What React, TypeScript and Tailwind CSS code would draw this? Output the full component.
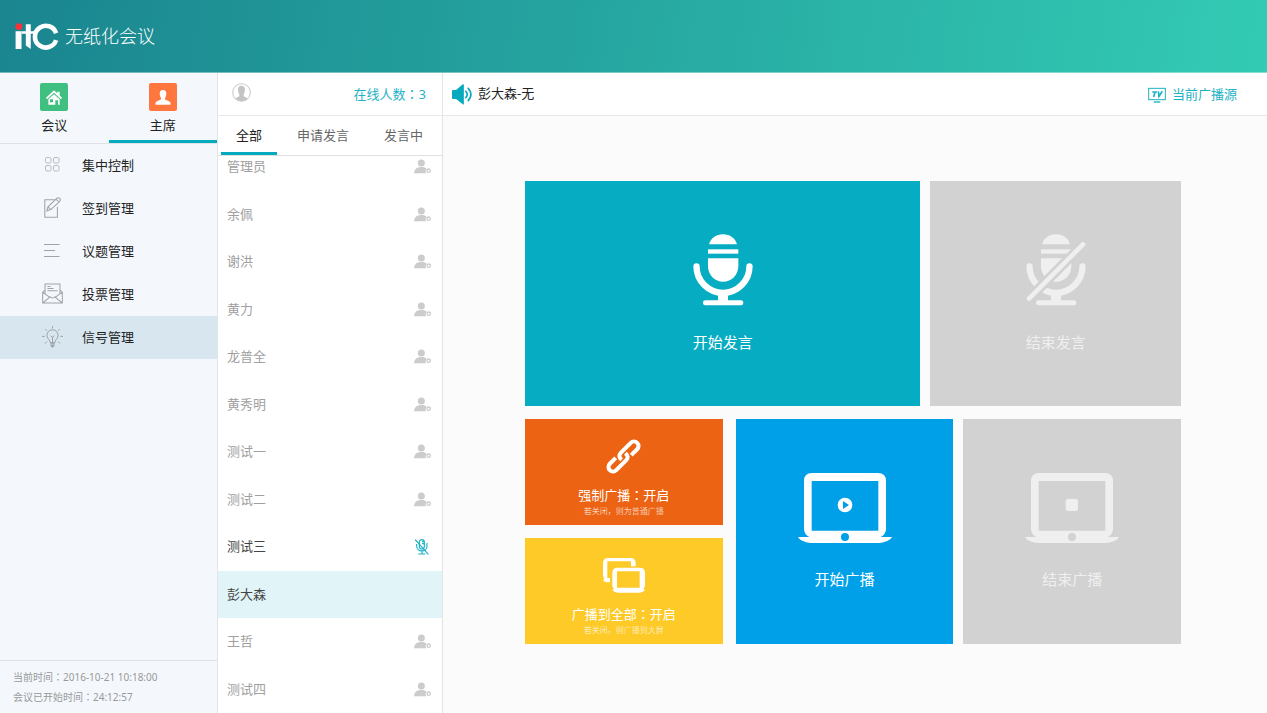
import React from "react";
import clsx from "clsx";

const members = [
  { name: "管理员", status: "offline" },
  { name: "余佩", status: "offline" },
  { name: "谢洪", status: "offline" },
  { name: "黄力", status: "offline" },
  { name: "龙普全", status: "offline" },
  { name: "黄秀明", status: "offline" },
  { name: "测试一", status: "offline" },
  { name: "测试二", status: "offline" },
  { name: "测试三", status: "muted" },
  { name: "彭大森", status: "selected" },
  { name: "王哲", status: "offline" },
  { name: "测试四", status: "offline" },
];

const menu = [
  { label: "集中控制", icon: <GridIcon /> },
  { label: "签到管理", icon: <SignIcon /> },
  { label: "议题管理", icon: <LinesIcon /> },
  { label: "投票管理", icon: <MailIcon /> },
  { label: "信号管理", icon: <BulbIcon />, active: true },
];

function Colon() {
  return <span className="font-['Noto_Sans_CJK_TC',sans-serif]">：</span>;
}

function Logo() {
  return (
    <svg viewBox="0 0 132 82" className="h-[27px] w-11" aria-label="itc">
      <rect x="1" y="25" width="18" height="54" fill="#fff" />
      <path d="M32 4H47V79L32 68ZM19 25H58V33H19Z" fill="#fff" />
      <path d="M124 31A33 33 0 1 0 124 52" fill="none" stroke="#fff" strokeWidth="14" />
      <circle cx="11" cy="11" r="10.500" fill="#f5333a" />
    </svg>
  );
}

function HouseIcon() {
  return (
    <svg viewBox="0 0 48 44" className="h-[15px] w-4" fill="#fff">
      <path d="M24 0L34 9V5H41V16L48 23L45 27L24 8L3 27L0 23Z" />
      <path fillRule="evenodd" d="M24 12L41 27V44H28V30H36V44H7V27ZM12 27V36H21V27Z" />
    </svg>
  );
}

function ChairIcon() {
  return (
    <svg viewBox="0 0 48 46" className="h-[15px] w-4" fill="#fff">
      <path d="M24 0C32 0 35 6 34 14C33 21 30 23 30 28C34 32 46 33 47 39V45H1V39C2 33 14 32 18 28C18 23 15 21 14 14C13 6 16 0 24 0Z" />
    </svg>
  );
}

function GridIcon() {
  return (
    <svg viewBox="0 0 15 15" className="size-[15px]" fill="none" stroke="#b8bcc0">
      <rect x="0.5" y="0.5" width="5.500" height="5.500" rx="1.500" />
      <rect x="8.500" y="0.5" width="5.500" height="5.500" rx="1.500" />
      <rect x="0.5" y="8.500" width="5.500" height="5.500" rx="1.500" />
      <rect x="8.500" y="8.500" width="5.500" height="5.500" rx="1.500" />
    </svg>
  );
}

function SignIcon() {
  return (
    <svg viewBox="0 0 48 60" className="h-[21px] w-[17px]" fill="none" stroke="#9fa3a7" strokeWidth="3">
      <path d="M30 8H2V58H38V28" />
      <path d="M8 40L11 28L36 4Q40 0 45 4Q48 8 44 13L19 36ZM34 6L43 15M11 28L19 36" />
    </svg>
  );
}

function LinesIcon() {
  return (
    <svg viewBox="0 0 16 13" className="h-[13px] w-4" stroke="#a0a4a8" strokeWidth="1">
      <path d="M0 0.500H15.500M0 6.500H11M0 12.500H15.500" />
    </svg>
  );
}

function MailIcon() {
  return (
    <svg viewBox="0 0 62 60" className="h-[21px] w-[21px]" fill="none" stroke="#9fa3a7" strokeWidth="3">
      <path d="M9 20L2 26V58H60V26L53 20M2 26L24 42M60 26L38 42M2 58L24 40Q31 46 38 40L60 58" />
      <path d="M9 31V2H53V31M16 9H25M16 15H34M16 22H46" />
    </svg>
  );
}

function BulbIcon() {
  return (
    <svg viewBox="0 0 64 66" className="h-[22px] w-[21px]" fill="none" stroke="#9a9fa3" strokeWidth="3">
      <path d="M25 50C25 42 15 38 15 28A17 17 0 0 1 49 28C49 38 39 42 39 50Z" />
      <path d="M32 48V33M27 29L32 34L37 29M32 0V7M10 9L15 14M54 9L49 14M0 31H8M56 31H64M9 53L15 47M55 53L49 47" />
      <path d="M25 54H39M26 59H38M29 63H35" strokeWidth="4" />
    </svg>
  );
}

function AvatarIcon() {
  return (
    <svg viewBox="0 0 56 56" className="size-[19px]">
      <circle cx="28" cy="28" r="26" fill="#fff" stroke="#c8c8c8" strokeWidth="3" />
      <path
        d="M28 8C37 8 39 15 38 23C37 30 34 32 34 38C37 42 44 42 46 46A25 25 0 0 1 10 46C12 42 19 42 22 38C22 32 19 30 18 23C17 15 19 8 28 8Z"
        fill="#c4c4c4"
      />
    </svg>
  );
}

function OfflineIcon() {
  return (
    <svg viewBox="0 0 51 45" className="h-[15px] w-[17px]">
      <circle cx="22" cy="12" r="10.500" fill="#ccc" />
      <path d="M0 43C1 30 9 24 22 24C30 24 35 26 38 30C34 34 34 39 37 43Z" fill="#ccc" />
      <circle cx="44" cy="35" r="5" fill="none" stroke="#ccc" strokeWidth="4" />
    </svg>
  );
}

function MutedIcon() {
  return (
    <svg viewBox="0 0 42 48" className="mr-0.5 h-4 w-3.5" fill="none" stroke="#1fb1c4" strokeWidth="3.500">
      <rect x="13" y="2" width="15" height="28" rx="7.500" />
      <path d="M5 15V22C5 40 36 40 36 22V12M21 36V45M10 45H31M21 8H28M21 14H28" />
      <path d="M1 2L40 46" />
    </svg>
  );
}

function SpeakerIcon() {
  return (
    <svg viewBox="0 0 62 62" className="size-[21px]" fill="#06aabf">
      <path d="M2 18H12L32 1Q35 0 35 4V58Q35 62 32 60L12 44H2Q0 44 0 41V21Q0 18 2 18Z" />
      <path
        d="M41 22Q49 31 41 40M48 13Q64 31 48 49"
        fill="none"
        stroke="#06aabf"
        strokeWidth="5"
        strokeLinecap="round"
      />
    </svg>
  );
}

function TvIcon() {
  return (
    <svg viewBox="0 0 54 48" className="h-4 w-[18px]" fill="none" stroke="#1fb1c4">
      <rect x="2" y="4" width="50" height="34" strokeWidth="3" />
      <path d="M17 45H37" strokeWidth="4" />
      <path d="M13 15H27M21 15L17 30M31 13L33 28L43 13" strokeWidth="5" />
    </svg>
  );
}

function MicIcon({ muted = false }: { muted?: boolean }) {
  return (
    <svg viewBox="0 0 180 216" className="h-[72px] w-[60px]" fill="currentColor">
      <path d="M48 31C54 12 69 1 90 1S126 12 132 31Z" />
      <rect x="45" y="46" width="91" height="13" />
      <path d="M45 73H136V97A45.500 46 0 0 1 45 97Z" />
      <path
        d="M10.500 97A79.500 79.500 0 0 0 169.500 97"
        fill="none"
        stroke="currentColor"
        strokeWidth="19"
        strokeLinecap="round"
      />
      <rect x="75" y="180" width="30" height="22" />
      <rect x="30" y="199" width="121" height="15" rx="7" />
      {muted && (
        <>
          <path d="M171 31L9 194" stroke="#d2d2d2" strokeWidth="30" />
          <path d="M171 31L9 194" stroke="currentColor" strokeWidth="14" strokeLinecap="round" />
        </>
      )}
    </svg>
  );
}

function LaptopIcon({ children }: { children: React.ReactNode }) {
  return (
    <svg viewBox="0 0 282 210" className="h-[70px] w-[94px]" fill="currentColor">
      <path
        fillRule="evenodd"
        d="M42 0H240Q264 0 264 24V168Q264 183 248 192H282C275 204 255 210 235 210H47C27 210 7 204 0 192H34Q18 183 18 168V24Q18 0 42 0ZM41 24V173H241V24ZM141 180A12 12 0 0 0 141 204A12 12 0 0 0 141 180Z"
      />
      {children}
    </svg>
  );
}

function ChainIcon() {
  return (
    <svg viewBox="-52 -52 104 104" className="size-[35px]" fill="none" stroke="#fff" strokeWidth="12">
      <g transform="rotate(-45)">
        <path d="M19 13.500H44A13.500 13.500 0 0 0 44 -13.500H2Q-12 -13 -11 3" />
        <path d="M-19 -13.500H-44A13.500 13.500 0 0 0 -44 13.500H-2Q12 13 11 -3" />
      </g>
    </svg>
  );
}

function ScreensIcon() {
  return (
    <svg viewBox="0 0 126 105" className="h-[35px] w-[42px]" fill="#fff">
      <path
        fillRule="evenodd"
        d="M44 29H110Q126 29 126 45V82Q126 89 121 93L126 96Q120 104 110 104H44Q34 104 28 96L33 93Q28 89 28 82V45Q28 29 44 29ZM42 40V89H110V40Z"
      />
      <path d="M16 0H82Q98 0 98 16V25H84V10H13V60H21V73H12Q4 73 0 66L4 62Q0 58 0 52V16Q0 0 16 0Z" />
    </svg>
  );
}

function Header() {
  return (
    <header className="flex h-[73px] shrink-0 items-center gap-1.5 border-b border-white/40 bg-linear-[100deg] from-[#1a858f] to-[#33cbb4] pl-[15px]">
      <Logo />
      <h1 className="text-[18px] font-light text-white">无纸化会议</h1>
    </header>
  );
}

function Sidebar() {
  return (
    <aside className="flex w-[218px] shrink-0 flex-col border-r border-[#e2e5e8] bg-[#f4f8fd]">
      <div className="flex h-[71px] shrink-0 border-b border-[#dfe2e5]">
        <button className="flex flex-1 flex-col items-center pt-2.5">
          <span className="flex size-7 items-center justify-center rounded-xs bg-[#3fbf80]">
            <HouseIcon />
          </span>
          <span className="mt-1 leading-5">会议</span>
        </button>
        <button className="flex flex-1 flex-col items-center border-b-3 border-[#06aabf] pt-2.5">
          <span className="flex size-7 items-center justify-center rounded-xs bg-[#ff763f]">
            <ChairIcon />
          </span>
          <span className="mt-1 leading-5">主席</span>
        </button>
      </div>
      <nav className="flex flex-1 flex-col">
        {menu.map((item) => (
          <button
            key={item.label}
            className={clsx(
              "flex h-[43px] items-center pl-8 text-left",
              item.active && "bg-[#d8e6ef]"
            )}
          >
            <span className="flex w-10 justify-center pb-0.5">{item.icon}</span>
            <span className="ml-2.5">{item.label}</span>
          </button>
        ))}
      </nav>
      <footer className="border-t border-[#dfe2e5] py-1.5 pl-[13px] text-[10px] leading-5 text-[#999]">
        <p>
          当前时间
          <Colon />
          2016-10-21 10:18:00
        </p>
        <p>
          会议已开始时间
          <Colon />
          24:12:57
        </p>
      </footer>
    </aside>
  );
}

function MemberList() {
  return (
    <section className="flex w-[225px] shrink-0 flex-col border-r border-[#e4e4e4] bg-white">
      <div className="flex h-[43px] shrink-0 items-center justify-between border-b border-[#e8e8e8] pr-4 pl-3.5">
        <span className="pb-1">
          <AvatarIcon />
        </span>
        <span className="text-[#1fb1c4]">
          在线人数
          <Colon />3
        </span>
      </div>
      <div className="flex h-10 shrink-0 border-b border-[#e0e0e0] pl-[3px] text-[#666]">
        <button className="border-b-3 border-[#06aabf] px-[15px] pt-[3px] text-[#222]">全部</button>
        <button className="px-5">申请发言</button>
        <button className="px-[15px]">发言中</button>
      </div>
      <div className="flex min-h-0 flex-1 flex-col overflow-hidden">
        <ul className="-mt-[13px] flex flex-1 flex-col">
          {members.map(({ name, status }) => (
            <li key={name} className="flex flex-1">
              <button
                className={clsx(
                  "flex flex-1 items-center justify-between pr-[11px] pl-[9px]",
                  status === "offline" ? "text-[#a0a0a0]" : "text-[#444]",
                  status === "selected" && "bg-[#e1f4f7]"
                )}
              >
                {name}
                {status === "offline" && <OfflineIcon />}
                {status === "muted" && <MutedIcon />}
              </button>
            </li>
          ))}
        </ul>
      </div>
    </section>
  );
}

interface TileProps {
  icon: React.ReactNode;
  label: string;
  className: string;
}

function Tile({ icon, label, className }: TileProps) {
  return (
    <button className={clsx("flex flex-col items-center justify-center", className)}>
      {icon}
      <span className="mt-[25px] text-[15px] leading-[22px]">{label}</span>
    </button>
  );
}

interface SwitchTileProps {
  icon: React.ReactNode;
  label: string;
  hint: string;
  className: string;
}

function SwitchTile({ icon, label, hint, className }: SwitchTileProps) {
  return (
    <button
      className={clsx("flex flex-1 flex-col items-center justify-start pt-5 text-white", className)}
    >
      {icon}
      <span className="mt-[13px] leading-4">
        {label}
        <Colon />
        开启
      </span>
      <span className="text-[8px] leading-4 font-light opacity-90">{hint}</span>
    </button>
  );
}

function Controls() {
  return (
    <main className="flex min-w-0 flex-1 flex-col bg-[#fbfbfb]">
      <div className="flex h-[43px] shrink-0 items-center justify-between border-b border-[#e8e8e8] bg-white pr-[30px] pl-[9px]">
        <div className="flex items-center gap-[5px]">
          <SpeakerIcon />
          <span>彭大森-无</span>
        </div>
        <a href="#source" className="flex items-center gap-1.5 pt-0.5 text-[#1fb1c4]">
          <TvIcon />
          当前广播源
        </a>
      </div>
      <div className="flex flex-1 flex-col justify-center gap-[13px] pr-[86px] pb-1 pl-[82px]">
        <div className="flex h-[225px] gap-2.5">
          <Tile icon={<MicIcon />} label="开始发言" className="flex-[396] bg-[#06acc1] text-white" />
          <Tile
            icon={<MicIcon muted />}
            label="结束发言"
            className="flex-[251] bg-[#d2d2d2] text-[#efefef]"
          />
        </div>
        <div className="flex h-[225px]">
          <div className="mr-[13px] flex flex-[198] flex-col gap-[13px]">
            <SwitchTile
              icon={<ChainIcon />}
              label="强制广播"
              hint="若关闭，则为普通广播"
              className="bg-[#ec6413]"
            />
            <SwitchTile
              icon={<ScreensIcon />}
              label="广播到全部"
              hint="若关闭，则广播到大屏"
              className="bg-[#fdca28]"
            />
          </div>
          <Tile
            icon={
              <LaptopIcon>
                <path
                  fillRule="evenodd"
                  d="M141 74A22 22 0 0 0 141 118A22 22 0 0 0 141 74ZM135 84L153 96L135 108Z"
                />
              </LaptopIcon>
            }
            label="开始广播"
            className="mr-2.5 flex-[218] bg-[#00a0e9] text-white"
          />
          <Tile
            icon={
              <LaptopIcon>
                <rect x="122" y="78" width="37" height="36" rx="7" />
              </LaptopIcon>
            }
            label="结束广播"
            className="flex-[218] bg-[#d2d2d2] text-[#efefef]"
          />
        </div>
      </div>
    </main>
  );
}

export default function App() {
  return (
    <div className="flex min-h-screen flex-col font-['Noto_Sans','Noto_Sans_CJK_SC',sans-serif] text-[13px] text-[#222]">
      <Header />
      <div className="flex flex-1">
        <Sidebar />
        <MemberList />
        <Controls />
      </div>
    </div>
  );
}
